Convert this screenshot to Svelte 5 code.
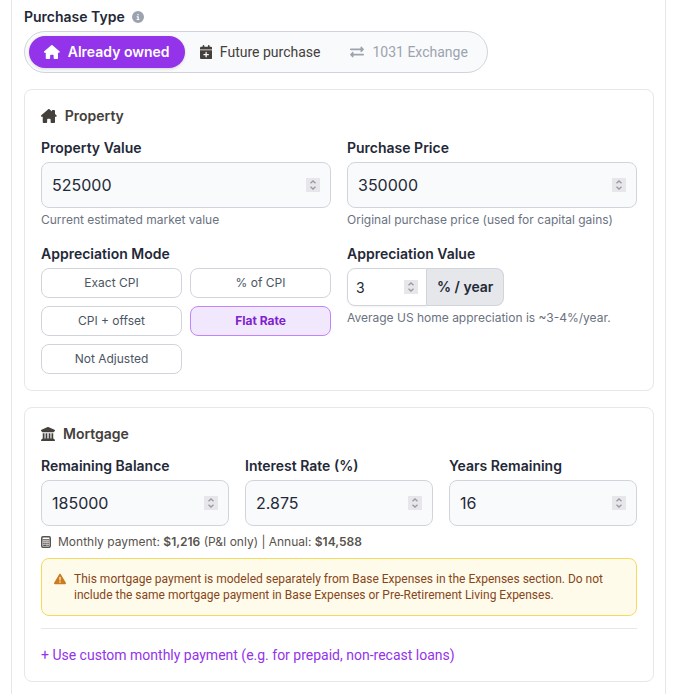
<script lang="ts">
  type PurchaseType = "owned" | "future" | "exchange";

  const HOUSE =
    "M575.8 255.5c0 18-15 32.1-32 32.1l-32 0 .7 160.2c0 2.7-.2 5.4-.5 8.1l0 16.2c0 22.1-17.9 40-40 40l-16 0c-1.1 0-2.2 0-3.3-.1c-1.4 .1-2.8 .1-4.2 .1L416 512l-24 0c-22.1 0-40-17.9-40-40l0-24 0-64c0-17.7-14.3-32-32-32l-64 0c-17.7 0-32 14.3-32 32l0 64 0 24c0 22.1-17.9 40-40 40l-24 0-31.9 0c-1.5 0-3-.1-4.5-.2c-1.2 .1-2.4 .2-3.6 .2l-16 0c-22.1 0-40-17.9-40-40l0-112c0-.9 0-1.9 .1-2.8l0-69.7-32 0c-18 0-32-14-32-32.1c0-9 3-17 10-24L266.4 8c7-7 15-8 22-8s15 2 21 7L564.8 231.5c8 7 12 15 11 24z";
  const CALENDAR_PLUS =
    "M96 32V64H48C21.5 64 0 85.5 0 112v48H448V112c0-26.5-21.5-48-48-48H352V32c0-17.7-14.3-32-32-32s-32 14.3-32 32V64H160V32c0-17.7-14.3-32-32-32S96 14.3 96 32zM448 192H0V464c0 26.5 21.5 48 48 48H400c26.5 0 48-21.5 48-48V192zM224 248c13.3 0 24 10.7 24 24v56h56c13.3 0 24 10.7 24 24s-10.7 24-24 24H248v56c0 13.3-10.7 24-24 24s-24-10.7-24-24V376H144c-13.3 0-24-10.7-24-24s10.7-24 24-24h56V272c0-13.3 10.7-24 24-24z";
  const EXCHANGE =
    "M0 168v-16c0-13.255 10.745-24 24-24h360V80c0-21.367 25.899-32.042 40.971-16.971l80 80c9.372 9.373 9.372 24.569 0 33.941l-80 80C409.956 271.982 384 261.456 384 240v-48H24c-13.255 0-24-10.745-24-24zm488 152H128v-48c0-21.314-25.862-32.08-40.971-16.971l-80 80c-9.372 9.373-9.372 24.569 0 33.941l80 80C102.057 463.997 128 453.437 128 432v-48h360c13.255 0 24-10.745 24-24v-16c0-13.255-10.745-24-24-24z";
  const BANK =
    "M243.4 2.6l-224 96c-14 6-21.8 21-18.7 35.8S16.8 160 32 160v8c0 13.3 10.7 24 24 24H456c13.3 0 24-10.7 24-24v-8c15.2 0 28.3-10.7 31.3-25.6s-4.8-29.9-18.7-35.8l-224-96c-8-3.4-17.2-3.4-25.2 0zM128 224H64V420.3c-.6 .3-1.2 .7-1.8 1.1l-48 32c-11.7 7.8-17 22.4-12.9 35.9S17.9 512 32 512H480c14.1 0 26.5-9.2 30.6-22.7s-1.1-28.1-12.9-35.9l-48-32c-.6-.4-1.2-.7-1.8-1.1V224H384V416H344V224H280V416H232V224H168V416H128V224z";
  const WARNING =
    "M256 32c14.2 0 27.3 7.5 34.5 19.8l216 368c7.3 12.4 7.3 27.7 .2 40.1S486.3 480 472 480H40c-14.3 0-27.6-7.7-34.7-20.1s-7-27.8 .2-40.1l216-368C228.7 39.5 241.8 32 256 32zm0 128c-13.3 0-24 10.7-24 24V296c0 13.3 10.7 24 24 24s24-10.7 24-24V184c0-13.3-10.7-24-24-24zm32 224a32 32 0 1 0 -64 0 32 32 0 1 0 64 0z";
  const INFO =
    "M256 512A256 256 0 1 0 256 0a256 256 0 1 0 0 512zM216 336h24V272H216c-13.3 0-24-10.7-24-24s10.7-24 24-24h48c13.3 0 24 10.7 24 24v88h8c13.3 0 24 10.7 24 24s-10.7 24-24 24H216c-13.3 0-24-10.7-24-24s10.7-24 24-24zm40-208a32 32 0 1 1 0 64 32 32 0 1 1 0-64z";

  const purchaseTypes: { id: PurchaseType; label: string; path: string; width: number; disabled?: boolean }[] = [
    { id: "owned", label: "Already owned", path: HOUSE, width: 576 },
    { id: "future", label: "Future purchase", path: CALENDAR_PLUS, width: 448 },
    { id: "exchange", label: "1031 Exchange", path: EXCHANGE, width: 512, disabled: true },
  ];

  const modes = ["Exact CPI", "% of CPI", "CPI + offset", "Flat Rate", "Not Adjusted"];

  let purchaseType = $state<PurchaseType>("owned");
  let mode = $state("Flat Rate");
  let propertyValue = $state(525000);
  let purchasePrice = $state(350000);
  let appreciation = $state(3);
  let balance = $state(185000);
  let rate = $state(2.875);
  let years = $state(16);
</script>

{#snippet icon(path: string, width: number)}
  <svg class="icon" viewBox="0 0 {width} 512" aria-hidden="true"><path d={path} /></svg>
{/snippet}

<main class="panel">
  <div class="type-label">
    <span class="label" id="purchase-type">Purchase Type</span>
    <button class="info" type="button" aria-label="About purchase type">
      {@render icon(INFO, 512)}
    </button>
  </div>

  <div class="segmented" role="group" aria-labelledby="purchase-type">
    {#each purchaseTypes as t (t.id)}
      <button
        type="button"
        class="segment"
        class:active={purchaseType === t.id}
        aria-pressed={purchaseType === t.id}
        disabled={t.disabled}
        onclick={() => (purchaseType = t.id)}
      >
        {@render icon(t.path, t.width)}
        {t.label}
      </button>
    {/each}
  </div>

  <section class="card">
    <h2>
      <svg class="icon" viewBox="0 0 576 512" aria-hidden="true">
        <path d={HOUSE} />
        <path d="M416 32h64c18 0 32 14 32 32v150L400 116V48c0-9 7-16 16-16z" />
      </svg>
      Property
    </h2>

    <div class="grid two">
      <div class="field">
        <label class="label" for="property-value">Property Value</label>
        <input id="property-value" class="input" type="number" bind:value={propertyValue} />
        <p class="hint">Current estimated market value</p>
      </div>

      <div class="field">
        <label class="label" for="purchase-price">Purchase Price</label>
        <input id="purchase-price" class="input" type="number" bind:value={purchasePrice} />
        <p class="hint">Original purchase price (used for capital gains)</p>
      </div>

      <div class="field">
        <span class="label" id="appreciation-mode">Appreciation Mode</span>
        <div class="modes" role="group" aria-labelledby="appreciation-mode">
          {#each modes as m (m)}
            <button
              type="button"
              class="mode"
              class:selected={mode === m}
              aria-pressed={mode === m}
              onclick={() => (mode = m)}
            >{m}</button>
          {/each}
        </div>
      </div>

      <div class="field">
        <label class="label" for="appreciation-value">Appreciation Value</label>
        <div class="input-group">
          <input id="appreciation-value" type="number" bind:value={appreciation} />
          <span class="addon">% / year</span>
        </div>
        <p class="hint">Average US home appreciation is ~3-4%/year.</p>
      </div>
    </div>
  </section>

  <section class="card">
    <h2>
      {@render icon(BANK, 512)}
      Mortgage
    </h2>

    <div class="grid three">
      <div class="field">
        <label class="label" for="balance">Remaining Balance</label>
        <input id="balance" class="input" type="number" bind:value={balance} />
      </div>
      <div class="field">
        <label class="label" for="rate">Interest Rate (%)</label>
        <input id="rate" class="input" type="number" step="0.125" bind:value={rate} />
      </div>
      <div class="field">
        <label class="label" for="years">Years Remaining</label>
        <input id="years" class="input" type="number" bind:value={years} />
      </div>
    </div>

    <p class="payment">
      <svg class="calculator" viewBox="0 0 10 12" aria-hidden="true">
        <rect x="0.75" y="0.75" width="8.5" height="10.5" rx="1.2" fill="none" stroke="currentColor" stroke-width="1.5" />
        <path d="M1.5 3.8h7" stroke="currentColor" stroke-width="1.2" />
        <path d="M2.2 5.8h1.5M4.2 5.8h1.5M6.3 5.8h1.5M2.2 7.6h1.5M4.2 7.6h1.5M6.3 7.6h1.5M2.2 9.4h3.5M6.3 9.4h1.5" stroke="currentColor" stroke-width="1.2" />
      </svg>
      <span>Monthly payment: <strong>$1,216</strong> (P&amp;I only) | Annual: <strong>$14,588</strong></span>
    </p>

    <div class="warning" role="note">
      {@render icon(WARNING, 512)}
      <p>
        This mortgage payment is modeled separately from Base Expenses in the Expenses section. Do not
        include the same mortgage payment in Base Expenses or Pre-Retirement Living Expenses.
      </p>
    </div>

    <div class="custom">
      <button type="button" class="link">+ Use custom monthly payment (e.g. for prepaid, non-recast loans)</button>
    </div>
  </section>
</main>

<style>
  :global(body) {
    margin: 0;
    background: #fff;
  }

  .panel {
    --font-ui: Inter, "Liberation Sans", sans-serif;
    --font-text: Roboto, "Liberation Sans", sans-serif;

    box-sizing: border-box;
    min-height: 100vh;
    margin: 0 10px 0 11px;
    padding: 7px 11px 12px 12px;
    border: solid #e5e7eb;
    border-width: 0 1px;
    font-family: var(--font-ui);
    font-size: 14px;
    line-height: 20px;
    color: #44403c;
  }

  .panel :is(button, input) {
    box-sizing: border-box;
    margin: 0;
  }

  input,
  button {
    font-family: var(--font-ui);
  }

  button {
    cursor: pointer;
  }

  .icon {
    display: block;
    flex: none;
    height: 14px;
    fill: currentColor;
  }

  .label {
    font-size: 14px;
    font-weight: 600;
    line-height: 20px;
    color: #1f2937;
  }

  .type-label {
    display: flex;
    align-items: center;
    gap: 7px;
    margin-bottom: 4px;
  }

  .info {
    padding: 0;
    border: 0;
    background: none;
    color: #9ca3af;
  }

  .info .icon,
  .warning .icon {
    height: 12px;
  }

  .segmented {
    display: inline-flex;
    padding: 4px;
    border: 1px solid #d1d5db;
    border-radius: 21px;
    background: #f9fafb;
  }

  .segment {
    display: flex;
    align-items: center;
    gap: 8px;
    padding: 6px 15px;
    border: 0;
    border-radius: 16px;
    background: none;
    color: #44403c;
    font-family: var(--font-text);
    font-size: 14px;
    font-weight: 400;
    line-height: 20px;
    white-space: nowrap;
  }

  .segment.active {
    background: #9333ea;
    color: #fff;
    font-family: var(--font-ui);
    font-weight: 600;
    box-shadow: 0 1px 3px rgb(0 0 0 / 0.15);
  }

  .segment:disabled {
    color: #9ca3af;
    cursor: not-allowed;
  }

  .card {
    margin-top: 16px;
    padding: 16px;
    border: 1px solid #e5e7eb;
    border-radius: 8px;
  }

  h2 {
    display: flex;
    align-items: center;
    gap: 8px;
    margin: 0 0 12px;
    font-size: 14px;
    font-weight: 600;
    line-height: 20px;
  }

  .grid {
    display: grid;
    gap: 16px;
  }

  .two {
    grid-template-columns: repeat(2, minmax(0, 1fr));
  }

  .three {
    grid-template-columns: repeat(3, minmax(0, 1fr));
  }

  .field {
    display: flex;
    flex-direction: column;
    gap: 4px;
  }

  .input {
    width: 100%;
    height: 46px;
    padding: 10px;
    border: 1px solid #d1d5db;
    border-radius: 8px;
    background: #f9fafb;
    color: #1f2937;
    font-size: 16px;
    line-height: 24px;
  }

  input::-webkit-inner-spin-button {
    appearance: none;
    align-self: center;
    width: 14px;
    height: 14px;
    opacity: 1;
    background: #e7e6ea
      url("data:image/svg+xml,%3Csvg xmlns='http://www.w3.org/2000/svg' viewBox='0 0 14 14' fill='none' stroke='%239a9a9f' stroke-width='1.3'%3E%3Cpath d='M4.5 5.2 7 2.9l2.5 2.3M4.5 8.8 7 11.1l2.5-2.3'/%3E%3C/svg%3E");
  }

  .hint {
    margin: 0;
    font-size: 12px;
    line-height: 16px;
    color: #6b7280;
  }

  .modes {
    display: grid;
    grid-template-columns: repeat(2, minmax(0, 1fr));
    gap: 8px;
  }

  .mode {
    padding: 6px 8px;
    border: 1px solid #d1d5db;
    border-radius: 8px;
    background: #fff;
    color: #4b5563;
    font-size: 12px;
    line-height: 16px;
  }

  .mode.selected {
    border-color: #c084fc;
    background: #f2e8fd;
    color: #7e22ce;
    font-weight: 700;
  }

  .input-group {
    display: flex;
  }

  .input-group input {
    width: 80px;
    height: 38px;
    padding: 8px;
    border: 1px solid #d1d5db;
    border-radius: 8px 0 0 8px;
    background: #fff;
    box-shadow: 0 1px 2px rgb(0 0 0 / 0.05);
    color: #1f2937;
    font-size: 14px;
  }

  .addon {
    padding: 8px 10px;
    border: 1px solid #d1d5db;
    border-left: 0;
    border-radius: 0 8px 8px 0;
    background: #e5e7eb;
    color: #1f2937;
    font-weight: 600;
  }

  .payment {
    display: flex;
    align-items: center;
    gap: 7px;
    margin: 8px 0;
    font-size: 12px;
    line-height: 16px;
    color: #57534e;
  }

  .payment strong {
    font-weight: 600;
  }

  .calculator {
    width: 10px;
    height: 12px;
  }

  .warning {
    display: flex;
    gap: 8px;
    padding: 12px;
    border: 1px solid #f5da5c;
    border-radius: 8px;
    background: #fffbeb;
    color: #86461a;
    font-family: var(--font-text);
    font-size: 12px;
    line-height: 16px;
  }

  .warning .icon {
    margin-top: 2px;
    color: #cc7c20;
  }

  .warning p {
    margin: 0;
  }

  .custom {
    margin-top: 12px;
    padding-top: 16px;
    border-top: 1px solid #e5e7eb;
  }

  .link {
    display: block;
    padding: 0;
    border: 0;
    background: none;
    color: #9333ea;
    font-family: var(--font-text);
    font-size: 14px;
    line-height: 20px;
    text-align: left;
  }
</style>
